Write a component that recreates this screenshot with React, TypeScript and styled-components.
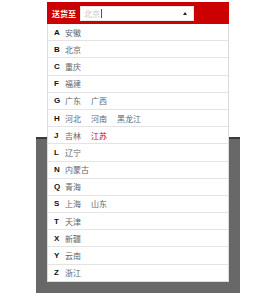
import React from "react";
import styled, { createGlobalStyle } from "styled-components";

const Global = createGlobalStyle`
  html, body { margin: 0; padding: 0; background: #fff; }
  body { font-family: "Liberation Sans", "Noto Sans CJK SC", sans-serif; }
`;

const Page = styled.div`
  position: relative;
  width: 263px;
  height: 296px;
  overflow: hidden;
`;

const Backdrop = styled.div`
  margin: 137px 0 0 36px;
  width: 204px;
  height: 154px;
  background: #686868;
  border-top: 2px solid #3a3a3a;
`;

const Dropdown = styled.div`
  position: absolute;
  top: 2px;
  left: 47px;
  width: 182px;
  background: #fff;
  box-sizing: border-box;
  border: 1px solid #dcdcdc;
  border-top: none;
`;

const Header = styled.div`
  display: flex;
  align-items: center;
  gap: 4px;
  height: 22px;
  margin: 0 -1px;
  padding: 0 5px;
  background: #cc0000;
`;

const HeaderLabel = styled.span`
  color: #fff;
  font-weight: bold;
  font-size: 8px;
  font-family: "Noto Sans CJK SC", sans-serif;
  white-space: nowrap;
`;

const InputBox = styled.div`
  display: flex;
  align-items: center;
  width: 114px;
  height: 15px;
  box-sizing: border-box;
  background: #fff;
  border: 1px solid #e8e8e8;
  padding: 0 4px 0 3px;
`;

const Placeholder = styled.span`
  color: #c8c8c8;
  font-size: 8px;
  font-family: "Noto Sans CJK SC", sans-serif;
  border-right: 1px solid #555;
  padding-right: 1px;
  line-height: 9px;
`;

const Caret = styled.span`
  margin-left: auto;
  margin-right: 2px;
  width: 0;
  height: 0;
  border-left: 2.5px solid transparent;
  border-right: 2.5px solid transparent;
  border-bottom: 3px solid #222;
`;

const Row = styled.div`
  display: flex;
  align-items: center;
  height: 17.2px;
  box-sizing: border-box;
  padding-left: 6px;
  border-bottom: 1px solid #e4e4e4;
  &:last-child { border-bottom: none; height: 16.2px; }
`;

const Letter = styled.span`
  width: 11px;
  font-weight: bold;
  font-size: 8px;
  color: #111;
  font-family: "Liberation Sans", sans-serif;
`;

const Name = styled.span<{ $active?: boolean }>`
  margin-right: 10px;
  font-size: 8px;
  color: ${(p) => (p.$active ? "#d40000" : "#666")};
  font-family: "Noto Sans CJK SC", sans-serif;
`;

const groups: { letter: string; names: string[]; active?: string }[] = [
  { letter: "A", names: ["安徽"] },
  { letter: "B", names: ["北京"] },
  { letter: "C", names: ["重庆"] },
  { letter: "F", names: ["福建"] },
  { letter: "G", names: ["广东", "广西"] },
  { letter: "H", names: ["河北", "河南", "黑龙江"] },
  { letter: "J", names: ["吉林", "江苏"], active: "江苏" },
  { letter: "L", names: ["辽宁"] },
  { letter: "N", names: ["内蒙古"] },
  { letter: "Q", names: ["青海"] },
  { letter: "S", names: ["上海", "山东"] },
  { letter: "T", names: ["天津"] },
  { letter: "X", names: ["新疆"] },
  { letter: "Y", names: ["云南"] },
  { letter: "Z", names: ["浙江"] },
];

export default function App() {
  return (
    <Page>
      <Global />
      <Backdrop />
      <Dropdown>
        <Header>
          <HeaderLabel>送货至</HeaderLabel>
          <InputBox>
            <Placeholder>北京</Placeholder>
            <Caret />
          </InputBox>
        </Header>
        {groups.map((g) => (
          <Row key={g.letter}>
            <Letter>{g.letter}</Letter>
            {g.names.map((n) => (
              <Name key={n} $active={n === g.active}>
                {n}
              </Name>
            ))}
          </Row>
        ))}
      </Dropdown>
    </Page>
  );
}
